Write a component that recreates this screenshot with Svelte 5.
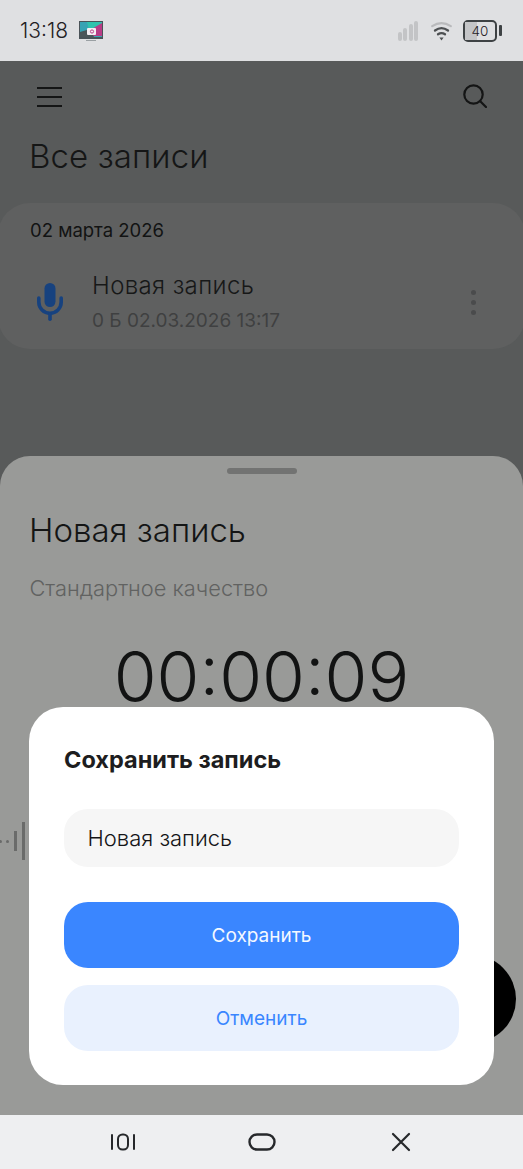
<script>
  const bars = [9, 13, 17, 20];
</script>

<div class="phone">
  <header class="status">
    <div class="status-left">
      <span class="clock">13:18</span>
      <svg class="cast" width="24" height="20" viewBox="0 0 24 20">
        <rect x="0" y="0" width="24" height="18" fill="#4a5358" />
        <rect x="1" y="1" width="22" height="15" fill="#37a3b4" />
        <path d="M8 1 H23 V3 L10 9 Z" fill="#2fc3ad" />
        <path d="M23 2 V15 L14 15 L11 9 Z" fill="#b83c86" />
        <path d="M1 16 V11 L11 8 L15 16 Z" fill="#4b5659" />
        <rect x="8" y="7" width="9" height="7" rx="1" fill="#f5eef3" />
        <circle cx="13" cy="10.5" r="1.6" fill="none" stroke="#b83c86" stroke-width="1" />
        <rect x="7" y="19" width="10" height="1" fill="#9aa0a3" />
      </svg>
    </div>
    <div class="status-right">
      <div class="signal">
        {#each bars as h}
          <span class="bar" style="height:{h}px"></span>
        {/each}
      </div>
      <svg class="wifi" width="21" height="20" viewBox="0 0 21 20" fill="none" stroke-linecap="round">
        <path d="M1.2 5.2 Q10.5 -0.8 19.8 5.2" stroke="#b9babc" stroke-width="2.2" />
        <path d="M4 9.5 Q10.5 4.8 17 9.5" stroke="#4d5052" stroke-width="2.3" />
        <path d="M7 13.3 Q10.5 10.8 14 13.3" stroke="#4d5052" stroke-width="2.3" />
        <path d="M8.4 16.5 H12.6 L10.5 19.5 Z" fill="#4d5052" />
      </svg>
      <div class="battery-wrap">
        <div class="battery">
          <span class="fill"></span>
          <span class="level">40</span>
        </div>
        <span class="cap"></span>
      </div>
    </div>
  </header>

  <main class="screen">
    <div class="toolbar">
      <svg class="menu" width="25" height="20" viewBox="0 0 25 20" fill="none" stroke="#141515" stroke-width="2">
        <path d="M0 1 H25 M0 10 H25 M0 19 H25" />
      </svg>
      <svg width="24" height="24" viewBox="0 0 24 24" fill="none" stroke="#141515" stroke-width="2.2" stroke-linecap="round">
        <circle cx="10.5" cy="10.5" r="9.2" />
        <path d="M17 17 L23 23" />
      </svg>
    </div>
    <h1 class="page-title">Все записи</h1>

    <section class="card">
      <div class="card-date">02 марта 2026</div>
      <div class="record">
        <svg class="mic" width="26" height="38" viewBox="0 0 26 38" fill="none">
          <rect x="7.5" y="0" width="11" height="24" rx="5.5" fill="#17427f" />
          <path d="M1.8 15 V19 A11.2 11.2 0 0 0 24.2 19 V15" stroke="#17427f" stroke-width="3.6" stroke-linecap="round" />
          <path d="M13 31 V36.2" stroke="#17427f" stroke-width="3.6" stroke-linecap="round" />
        </svg>
        <div class="record-text">
          <div class="record-name">Новая запись</div>
          <div class="record-meta">0 Б 02.03.2026 13:17</div>
        </div>
        <div class="dots"><span></span><span></span><span></span></div>
      </div>
    </section>

    <section class="sheet">
      <div class="handle"></div>
      <h2 class="sheet-title">Новая запись</h2>
      <div class="quality">Стандартное качество</div>
      <div class="timer">00:00:09</div>
      <div class="wave"><i class="d"></i><i class="d"></i><i class="m"></i><i class="l"></i></div>
      <div class="fab"></div>
    </section>

    <div class="dialog">
      <h3 class="dialog-title">Сохранить запись</h3>
      <div class="field">Новая запись</div>
      <button class="btn primary">Сохранить</button>
      <button class="btn secondary">Отменить</button>
    </div>
  </main>

  <nav class="navbar">
    <svg width="26" height="18" viewBox="0 0 26 18" fill="none" stroke="#26282b" stroke-width="2" stroke-linecap="round">
      <path d="M2 2 V16 M24 2 V16" />
      <rect x="8" y="1.5" width="10" height="15" rx="4.5" />
    </svg>
    <svg width="28" height="18" viewBox="0 0 28 18" fill="none" stroke="#26282b" stroke-width="2.4">
      <rect x="1.5" y="1.5" width="25" height="15" rx="7.5" />
    </svg>
    <svg width="20" height="20" viewBox="0 0 20 20" fill="none" stroke="#26282b" stroke-width="2.2" stroke-linecap="round">
      <path d="M2 2 L18 18 M18 2 L2 18" />
    </svg>
  </nav>
</div>

<style>
  :global(body) {
    margin: 0;
    background: #585a5a;
  }
  .phone {
    width: 523px;
    height: 1169px;
    display: flex;
    flex-direction: column;
    overflow: hidden;
    font-family: Inter, "Noto Sans", sans-serif;
  }
  .status {
    height: 61px;
    flex: none;
    background: #dfe0e2;
    display: flex;
    align-items: center;
    justify-content: space-between;
    padding: 0 21px 0 20px;
    box-sizing: border-box;
  }
  .status-left {
    display: flex;
    align-items: center;
    gap: 11px;
  }
  .clock {
    font-size: 21px;
    font-weight: 300;
    color: #1f2124;
  }
  .status-right {
    display: flex;
    align-items: center;
    gap: 11px;
  }
  .signal {
    display: flex;
    align-items: flex-end;
    gap: 1.5px;
    height: 20px;
    margin-right: 2px;
  }
  .bar {
    width: 4px;
    background: #c3c4c6;
    border-radius: 2px;
  }
  .battery-wrap {
    display: flex;
    align-items: center;
    gap: 2px;
  }
  .battery {
    position: relative;
    width: 34px;
    height: 22px;
    box-sizing: border-box;
    border: 2.5px solid #3e4244;
    border-radius: 5px;
    display: flex;
    align-items: center;
    justify-content: center;
  }
  .fill {
    position: absolute;
    left: 0;
    top: 0;
    bottom: 0;
    width: 12px;
    background: #c4c5c7;
  }
  .level {
    position: relative;
    font-size: 13.5px;
    font-weight: 300;
    color: #1f2124;
  }
  .cap {
    width: 3px;
    height: 11px;
    background: #3e4244;
    border-radius: 1px;
  }
  .screen {
    position: relative;
    flex: 1;
    min-height: 0;
    background: #585a5a;
  }
  .toolbar {
    display: flex;
    justify-content: space-between;
    align-items: center;
    padding: 23px 36px 0 37px;
  }
  .menu {
    margin-top: 2px;
  }
  .page-title {
    margin: 26px 0 0 29px;
    font-size: 33px;
    line-height: 44px;
    font-weight: 300;
    letter-spacing: 0.1px;
    color: #151616;
  }
  .card {
    margin: 25px -2px 0 -2px;
    height: 146px;
    box-sizing: border-box;
    background: #5f6060;
    border-radius: 32px;
    padding: 14px 32px 0;
  }
  .card-date {
    font-size: 18.5px;
    line-height: 26px;
    color: #121313;
  }
  .record {
    display: flex;
    align-items: center;
    margin-top: 27px;
  }
  .mic {
    margin-left: 7px;
    flex: none;
  }
  .record-text {
    margin-left: 29px;
    flex: 1;
  }
  .record-name {
    font-size: 24px;
    line-height: 32px;
    letter-spacing: 0.37px;
    font-weight: 300;
    color: #171818;
  }
  .record-meta {
    font-size: 19px;
    line-height: 26px;
    margin-top: 6px;
    color: #3f4041;
  }
  .dots {
    display: flex;
    flex-direction: column;
    gap: 5px;
    margin-right: 17px;
  }
  .dots span {
    width: 5px;
    height: 5px;
    border-radius: 50%;
    background: #4a4b4c;
  }
  .sheet {
    position: absolute;
    left: 0;
    right: 0;
    top: 395px;
    bottom: 0;
    background: #999a98;
    border-radius: 30px 30px 0 0;
    overflow: hidden;
  }
  .handle {
    width: 70px;
    height: 6px;
    border-radius: 3px;
    background: #727372;
    margin: 12px auto 0;
  }
  .sheet-title {
    margin: 34px 0 0 29px;
    font-size: 33px;
    line-height: 44px;
    font-weight: 300;
    color: #141515;
  }
  .quality {
    margin: 21px 0 0 29.5px;
    font-size: 21.8px;
    line-height: 30px;
    font-weight: 300;
    color: #616261;
  }
  .timer {
    margin-top: 33px;
    text-align: center;
    font-size: 69.5px;
    line-height: 82px;
    font-weight: 300;
    color: #121313;
  }
  .wave {
    position: absolute;
    left: -1px;
    top: 365px;
    height: 40px;
    display: flex;
    align-items: center;
    gap: 4px;
  }
  .wave i {
    display: block;
    background: #6a6b6a;
  }
  .wave .d {
    width: 3px;
    height: 3px;
    border-radius: 50%;
  }
  .wave .m {
    width: 3px;
    height: 20px;
    margin-left: 1px;
  }
  .wave .l {
    width: 3px;
    height: 38px;
    margin-left: 1px;
  }
  .fab {
    position: absolute;
    left: 428px;
    top: 499px;
    width: 88px;
    height: 88px;
    border-radius: 50%;
    background: #000;
  }
  .dialog {
    position: absolute;
    left: 29px;
    right: 29px;
    bottom: 30px;
    box-sizing: border-box;
    height: 378px;
    background: #fff;
    border-radius: 34px;
    padding: 37px 35px 0;
  }
  .dialog-title {
    margin: 0;
    font-size: 23.5px;
    line-height: 32px;
    font-weight: 700;
    color: #1d1d20;
  }
  .field {
    margin-top: 33px;
    height: 58px;
    box-sizing: border-box;
    padding: 0 23.5px;
    background: #f6f6f6;
    border-radius: 24px;
    display: flex;
    align-items: center;
    font-size: 22px;
    font-weight: 300;
    color: #141417;
  }
  .btn {
    display: block;
    width: 100%;
    border: 0;
    border-radius: 24px;
    font-family: inherit;
    font-size: 19px;
    padding: 0;
  }
  .primary {
    margin-top: 35px;
    height: 65.5px;
    padding-top: 2px;
    background: #3a86ff;
    color: #f4f8ff;
  }
  .secondary {
    margin-top: 17.5px;
    height: 66px;
    background: #e9f1fe;
    color: #3a86ff;
  }
  .navbar {
    height: 54px;
    flex: none;
    background: #eeeff1;
    display: grid;
    grid-template-columns: repeat(3, 139px);
    justify-content: center;
    justify-items: center;
    align-items: center;
  }
</style>
